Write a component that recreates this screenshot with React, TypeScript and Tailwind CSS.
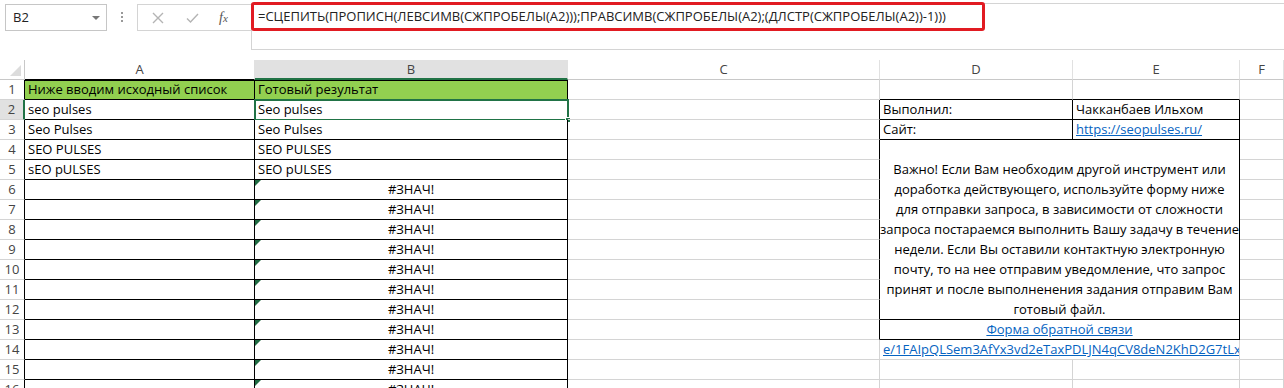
import React from "react";

const GRID = "border-[#d4d4d4]";

type CellProps = {
  className?: string;
  children?: React.ReactNode;
};

function Cell({ className = "", children }: CellProps) {
  return (
    <div className={`relative h-[20px] overflow-hidden whitespace-nowrap border-r border-b px-[3px] text-[13px] leading-[19px] ${className}`}>
      {children}
    </div>
  );
}

function ErrMark() {
  return <span className="absolute left-0 top-0 h-0 w-0 border-t-[6px] border-r-[6px] border-t-[#1f6b42] border-r-transparent" />;
}

const paragraph = [
  "Важно! Если Вам необходим другой инструмент или",
  "доработка действующего, используйте форму ниже",
  "для отправки запроса, в зависимости от сложности",
  "запроса постараемся выполнить Вашу задачу в течение",
  "недели. Если Вы оставили контактную электронную",
  "почту, то на нее отправим уведомление, что запрос",
  "принят и после выполненения задания отправим Вам",
  "готовый файл.",
];

const colA: Record<number, string> = {
  1: "Ниже вводим исходный список",
  2: "seo pulses",
  3: "Seo Pulses",
  4: "SEO PULSES",
  5: "sEO pULSES",
};

const colB: Record<number, string> = {
  1: "Готовый результат",
  2: "Seo pulses",
  3: "Seo Pulses",
  4: "SEO PULSES",
  5: "SEO pULSES",
};

function FormulaBar() {
  return (
    <div className="flex h-[60px] items-start bg-white pt-[3px]">
      <div className="ml-[5px] mt-[1px] flex h-[27px] w-[102px] items-center justify-between border border-[#c6c6c6] pl-[7px] pr-[6px] text-[13px] text-[#222]">
        <span>B2</span>
        <span className="h-0 w-0 border-x-[4px] border-t-[4px] border-x-transparent border-t-[#777]" />
      </div>
      <div className="flex w-[30px] flex-col items-center gap-[2px] pt-[9px]">
        <span className="h-[2px] w-[2px] bg-[#999]" />
        <span className="h-[2px] w-[2px] bg-[#999]" />
        <span className="h-[2px] w-[2px] bg-[#999]" />
      </div>
      <div className="mt-[1px] flex h-[27px] w-[114px] items-center border border-r-0 border-[#d4d4d4] pl-[14px]">
        <svg width="12" height="12" viewBox="0 0 12 12" className="mr-[22px]">
          <path d="M1 1L11 11M11 1L1 11" stroke="#b4b4b4" strokeWidth="1.4" />
        </svg>
        <svg width="13" height="12" viewBox="0 0 13 12" className="mr-[20px]">
          <path d="M1 6.5L4.5 10L12 2" stroke="#b4b4b4" strokeWidth="1.4" fill="none" />
        </svg>
        <span className="font-['Liberation_Serif',serif] text-[14px] italic text-[#555]">
          f<span className="text-[11px]">x</span>
        </span>
      </div>
      <div className="h-[47px] flex-1 border border-r-0 border-[#d4d4d4]">
        <div className="-ml-px -mt-[2px] flex h-[29px] w-[734px] items-center rounded-[3px] border-[3px] border-[#e11b22] pl-[4px] text-[13px] text-[#222]">
          =СЦЕПИТЬ(ПРОПИСН(ЛЕВСИМВ(СЖПРОБЕЛЫ(A2)));ПРАВСИМВ(СЖПРОБЕЛЫ(A2);(ДЛСТР(СЖПРОБЕЛЫ(A2))-1)))
        </div>
      </div>
    </div>
  );
}

function Sheet() {
  const rows = Array.from({ length: 16 }, (_, i) => i + 1);
  const cells: React.ReactNode[] = [];

  // шапка колонок
  cells.push(
    <div key="corner" className="flex h-[20px] items-end justify-end border-r border-b border-[#c8c8c8] bg-white pb-[3px] pr-[3px]">
      <span className="h-0 w-0 border-l-[11px] border-t-[11px] border-l-transparent border-t-transparent border-r-[11px] border-r-[#dcdcdc]" />
    </div>
  );
  const headers = [
    { k: "A", cls: "border-b-black bg-white" },
    { k: "B", cls: "border-b-2 border-b-[#217346] bg-[#e1e1e1]" },
    { k: "C", cls: "border-b-[#c8c8c8] bg-white" },
    { k: "D", cls: "border-b-[#c8c8c8] bg-white" },
    { k: "E", cls: "border-b-[#c8c8c8] bg-white" },
    { k: "F", cls: "border-b-[#c8c8c8] bg-white" },
  ];
  headers.forEach((h) => {
    cells.push(
      <div key={h.k} className={`h-[20px] border-r border-b border-r-[#e1e1e1] text-center text-[13px] leading-[19px] text-[#444] ${h.cls}`}>
        {h.k}
      </div>
    );
  });

  rows.forEach((r) => {
    const sel = r === 2;
    cells.push(
      <div
        key={`h${r}`}
        className={`h-[20px] border-b border-b-[#d4d4d4] text-center text-[13px] leading-[19px] text-[#444] ${sel ? "border-r-2 border-r-[#217346] bg-[#e1e1e1]" : "border-r border-r-black bg-white"}`}
      >
        {r}
      </div>
    );

    // A
    cells.push(
      <Cell key={`a${r}`} className={`border-r-black border-b-black text-black ${r === 1 ? "bg-[#92d050] shadow-[inset_0_1px_0_#000]" : "bg-white"}`}>
        {colA[r]}
      </Cell>
    );

    // B
    cells.push(
      <Cell
        key={`b${r}`}
        className={`overflow-visible border-r-black border-b-black text-black ${r === 1 ? "bg-[#92d050] shadow-[inset_0_1px_0_#000]" : "bg-white"} ${r >= 6 ? "text-center" : ""}`}
      >
        {r >= 6 ? (
          <>
            <ErrMark />
            #ЗНАЧ!
          </>
        ) : (
          colB[r]
        )}
        {sel && (
          <>
            <span className="pointer-events-none absolute -left-px -top-px bottom-[-2px] right-[-2px] border-2 border-[#217346]" />
            <span className="absolute bottom-[-4px] right-[-4px] h-[6px] w-[6px] border border-white bg-[#217346]" />
          </>
        )}
      </Cell>
    );

    // C
    cells.push(
      <Cell key={`c${r}`} className={`${r >= 2 && r <= 13 ? "border-r-black" : "border-r-[#d4d4d4]"} border-b-[#d4d4d4]`} />
    );

    // D / E
    if (r === 1) {
      cells.push(<Cell key="d1" className="border-r-[#d4d4d4] border-b-black" />);
      cells.push(<Cell key="e1" className="border-r-[#d4d4d4] border-b-black" />);
    } else if (r === 2 || r === 3) {
      cells.push(
        <Cell key={`d${r}`} className="border-r-black border-b-black text-black">
          {r === 2 ? "Выполнил:" : "Сайт:"}
        </Cell>
      );
      cells.push(
        <Cell key={`e${r}`} className={`border-r-black border-b-black ${r === 3 ? "text-[#0563c1] underline" : "text-black"}`}>
          {r === 2 ? "Чакканбаев Ильхом" : "https://seopulses.ru/"}
        </Cell>
      );
    } else if (r === 4) {
      cells.push(
        <div
          key="d4"
          className="col-span-2 row-span-9 flex flex-col items-center justify-end whitespace-nowrap border-r border-b border-r-black border-b-black bg-white text-center text-[13px] leading-[20px] text-black"
        >
          {paragraph.map((l) => (
            <div key={l}>{l}</div>
          ))}
        </div>
      );
    } else if (r === 13) {
      cells.push(
        <Cell key="d13" className="col-span-2 border-r-black border-b-black text-center text-[#0563c1] underline">
          Форма обратной связи
        </Cell>
      );
    } else if (r === 14) {
      cells.push(
        <Cell key="d14" className="col-span-2 border-r-[#d4d4d4] border-b-[#d4d4d4] px-0 text-[#0563c1] underline">
          e/1FAIpQLSem3AfYx3vd2eTaxPDLJN4qCV8deN2KhD2G7tLx
        </Cell>
      );
    } else if (r > 14) {
      cells.push(<Cell key={`d${r}`} className="border-r-[#d4d4d4] border-b-[#d4d4d4]" />);
      cells.push(<Cell key={`e${r}`} className="border-r-[#d4d4d4] border-b-[#d4d4d4]" />);
    }

    // F
    cells.push(<Cell key={`f${r}`} className={GRID} />);
  });

  return (
    <div className="grid h-[328px] grid-cols-[25px_230px_313px_312px_193px_167px_44px] auto-rows-[20px] overflow-hidden bg-white">
      {cells}
    </div>
  );
}

export default function App() {
  return (
    <div className="h-[388px] w-[1284px] overflow-hidden bg-white font-['Open_Sans',sans-serif]">
      <FormulaBar />
      <Sheet />
    </div>
  );
}
